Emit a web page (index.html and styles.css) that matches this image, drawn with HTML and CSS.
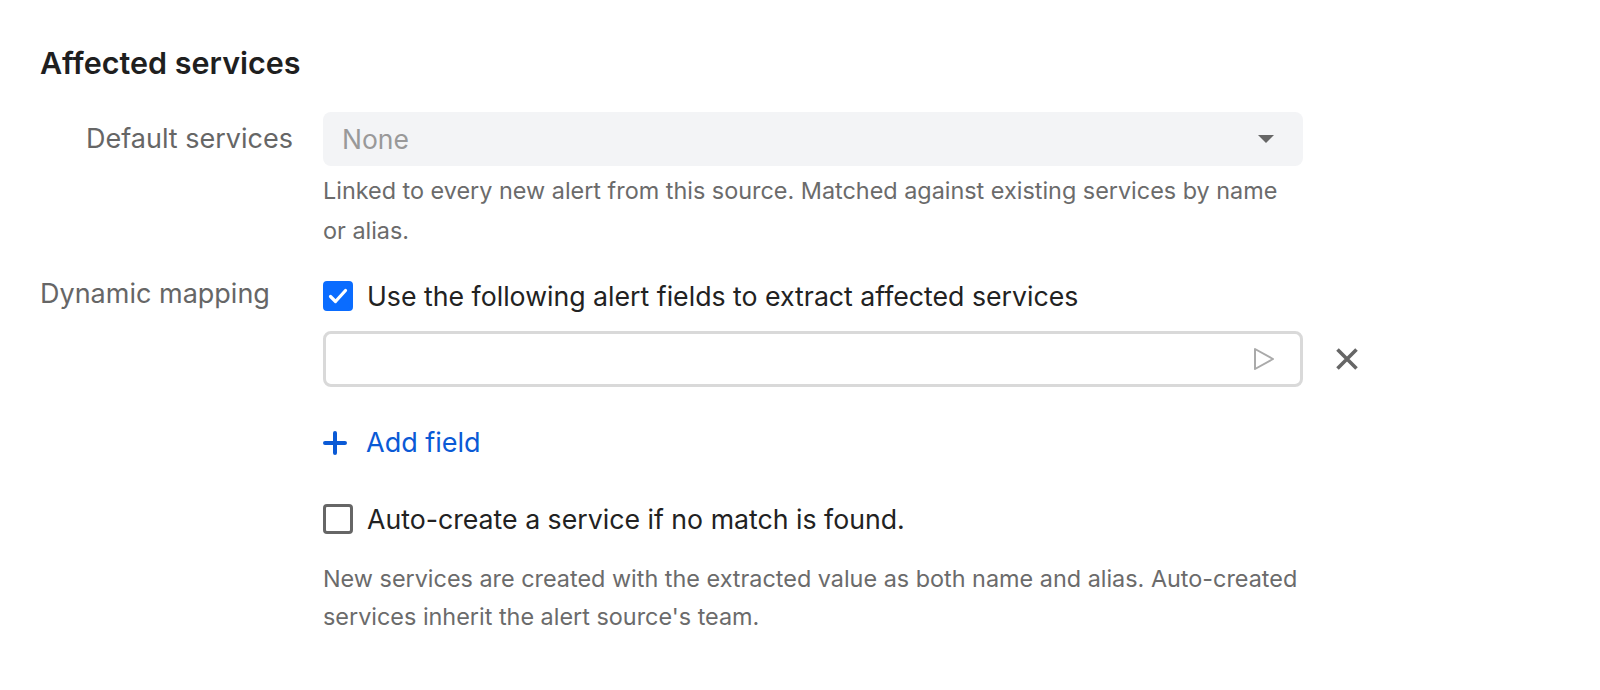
FILE: index.html
```html
<!DOCTYPE html>
<html lang="en">
<head>
    <meta charset="UTF-8">
    <title>Affected services</title>
    <link rel="stylesheet" href="styles.css">
</head>
<body>
    <div class="section">
        <h2 class="section-title">Affected services</h2>

        <div class="form-row">
            <label class="field-label right">Default services</label>
            <div class="field-body">
                <div class="select">
                    <span class="placeholder">None</span>
                    <svg class="caret" width="16" height="8" viewBox="0 0 16 8"><path d="M0 0h16L8 8z" fill="#666"/></svg>
                </div>
                <p class="hint hint-first">Linked to every new alert from this source. Matched against existing services by name or alias.</p>
            </div>
        </div>

        <div class="form-row mapping">
            <label class="field-label">Dynamic mapping</label>
            <div class="field-body">
                <label class="check">
                    <span class="box checked">
                        <svg width="20" height="16" viewBox="0 0 20 16"><path d="M2.5 8.5l5 5L17.5 2.5" fill="none" stroke="#fff" stroke-width="3.2" stroke-linecap="round" stroke-linejoin="round"/></svg>
                    </span>
                    Use the following alert fields to extract affected services
                </label>

                <div class="field-line">
                    <div class="text-input">
                        <svg class="run" width="22" height="24" viewBox="0 0 22 24"><path d="M2 2l18 10L2 22z" fill="none" stroke="#aaa" stroke-width="2" stroke-linejoin="round"/></svg>
                    </div>
                    <button class="remove" type="button">
                        <svg width="24" height="24" viewBox="0 0 24 24"><path d="M2.5 2.5l19 19M21.5 2.5l-19 19" stroke="#666" stroke-width="3.6"/></svg>
                    </button>
                </div>

                <a class="add-link" href="#">
                    <svg width="24" height="24" viewBox="0 0 24 24"><path d="M12 2v20M2 12h20" stroke="#0a5ad6" stroke-width="4" stroke-linecap="round"/></svg>
                    Add field
                </a>

                <label class="check auto">
                    <span class="box"></span>
                    Auto-create a service if no match is found.
                </label>
                <p class="hint hint-last">New services are created with the extracted value as both name and alias. Auto-created services inherit the alert source's team.</p>
            </div>
        </div>
    </div>
</body>
</html>
```

FILE: styles.css
```css
* {
    margin: 0;
    padding: 0;
    box-sizing: border-box;
}

body {
    font-family: Inter, "Noto Sans", "Liberation Sans", sans-serif;
    background: #fff;
    color: #222;
}

.section {
    padding: 47px 0 0 40px;
}

.section-title {
    font-size: 30.5px;
    line-height: 32px;
    font-weight: 600;
    color: #1f1f1f;
    margin-bottom: 33px;
}

.form-row {
    display: grid;
    grid-template-columns: 283px 1060px;
}

.field-label {
    font-size: 27px;
    color: #666;
    line-height: 54px;
}

.field-label.right {
    text-align: right;
    padding-right: 30px;
}

.mapping {
    margin-top: 30px;
}

.mapping .field-label {
    line-height: 26px;
}

.select {
    width: 980px;
    height: 54px;
    background: #f3f4f6;
    border-radius: 8px;
    display: flex;
    align-items: center;
    justify-content: space-between;
    padding: 0 29px 0 19px;
}

.placeholder {
    font-size: 26.5px;
    color: #999;
}

.hint {
    font-size: 23.4px;
    line-height: 40px;
    color: #6b6b6b;
    width: 976px;
}

.hint-first {
    margin-top: 5px;
}

.hint-last {
    margin-top: 26px;
    line-height: 38px;
}

.check {
    display: flex;
    align-items: center;
    gap: 14px;
    font-size: 26.7px;
    line-height: 30px;
    color: #222;
}

.box {
    width: 30px;
    height: 30px;
    border: 3px solid #666;
    border-radius: 4px;
    display: flex;
    align-items: center;
    justify-content: center;
    flex-shrink: 0;
}

.box.checked {
    background: #0a6cff;
    border-color: #0a6cff;
}

.field-line {
    display: flex;
    align-items: center;
    margin-top: 20px;
}

.text-input {
    width: 980px;
    height: 56px;
    border: 3px solid #d9d9d9;
    border-radius: 8px;
    display: flex;
    align-items: center;
    justify-content: flex-end;
    padding-right: 25px;
}

.remove {
    background: none;
    border: none;
    margin-left: 32px;
    display: flex;
}

.add-link {
    display: inline-flex;
    align-items: center;
    gap: 19px;
    margin-top: 41px;
    font-size: 27px;
    line-height: 30px;
    color: #0a5ad6;
    text-decoration: none;
}

.auto {
    margin-top: 45px;
}
```
